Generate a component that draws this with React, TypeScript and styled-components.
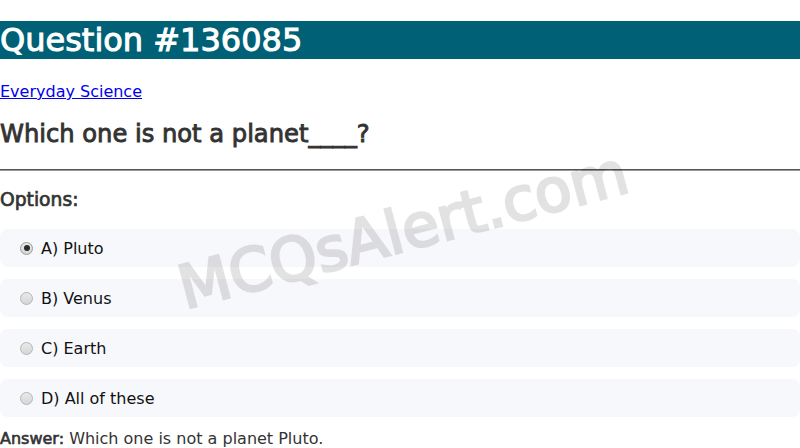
import React from "react";
import styled, { createGlobalStyle, css } from "styled-components";

const Global = createGlobalStyle`
  html, body { margin: 0; padding: 0; background: #fff; }
  body { font-family: "DejaVu Sans", sans-serif; color: #333; }
`;

/* synthetic bold: regular glyph widths with a thickened outline */
const fakeBold = (w: number) => css`
  font-weight: normal;
  -webkit-text-stroke: ${w}px currentColor;
`;

const Page = styled.div`
  position: relative;
  overflow: hidden;
  height: 448px;
`;

const Title = styled.h1`
  margin: 21px 0 0;
  background: #006075;
  color: #fff;
  font-size: 32px;
  line-height: 38px;
  ${fakeBold(1)}
`;

const Category = styled.p`
  margin: 23px 0 0;
  font-size: 16px;
  line-height: 19px;
  a { color: #0000ee; text-decoration: underline; }
`;

const Question = styled.h2`
  margin: 19px 0 0;
  font-size: 24.2px;
  line-height: 28px;
  color: #333;
  ${fakeBold(0.9)}
`;

const Rule = styled.hr`
  margin: 21px 0 0;
  border: 0;
  border-top: 1px solid #555;
  border-bottom: 1px solid #9a9a9a;
  height: 0;
`;

const OptionsTitle = styled.h3`
  margin: 18px 0 0;
  font-size: 18.72px;
  line-height: 22px;
  color: #333;
  ${fakeBold(0.7)}
`;

const OptionList = styled.div`
  display: flex;
  flex-direction: column;
  gap: 12px;
  margin-top: 18px;
`;

const Option = styled.label`
  display: flex;
  align-items: center;
  height: 38px;
  padding: 0 15px;
  box-sizing: border-box;
  background: #f7f8fc;
  border-radius: 8px;
  font-size: 16px;
  color: #111;
`;

const Radio = styled.span<{ $checked: boolean }>`
  position: relative;
  flex: none;
  width: 13px;
  height: 13px;
  margin: 0 8px 0 5px;
  box-sizing: border-box;
  border-radius: 50%;
  border: 1px solid ${(p) => (p.$checked ? "#9a9a9a" : "#b4b4b4")};
  background: linear-gradient(#e9e9e9, #d6d6d6);
  &::after {
    content: "";
    display: ${(p) => (p.$checked ? "block" : "none")};
    position: absolute;
    left: 2.5px;
    top: 2.5px;
    width: 6px;
    height: 6px;
    border-radius: 50%;
    background: #2b2b2b;
  }
`;

const Answer = styled.p`
  margin: 12px 0 0;
  font-size: 16px;
  line-height: 19px;
  color: #333;
  b { ${fakeBold(0.62)} }
`;

const Watermark = styled.div`
  position: absolute;
  left: 403px;
  top: 230px;
  transform: translate(-50%, -50%) rotate(-14.8deg);
  font-family: "DejaVu Sans", sans-serif;
  font-size: 60px;
  ${fakeBold(2.6)}
  color: #000;
  opacity: 0.11;
  white-space: nowrap;
  pointer-events: none;
`;

const options = ["A) Pluto", "B) Venus", "C) Earth", "D) All of these"];

export default function App() {
  return (
    <>
      <Global />
      <Page>
        <Title>Question #136085</Title>
        <Category>
          <a href="#">Everyday Science</a>
        </Category>
        <Question>Which one is not a planet____?</Question>
        <Rule />
        <OptionsTitle>Options:</OptionsTitle>
        <OptionList>
          {options.map((o, i) => (
            <Option key={o}>
              <Radio $checked={i === 0} />
              {o}
            </Option>
          ))}
        </OptionList>
        <Answer>
          <b>Answer:</b> Which one is not a planet Pluto.
        </Answer>
        <Watermark>MCQsAlert.com</Watermark>
      </Page>
    </>
  );
}
